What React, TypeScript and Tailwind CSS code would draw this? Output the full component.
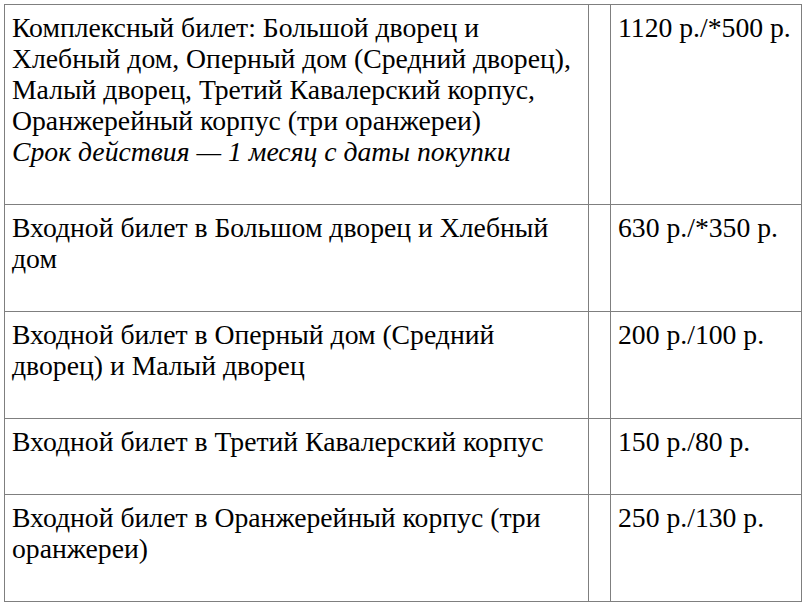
import React from "react";

const rows: { text: React.ReactNode; price: string; h: string }[] = [
  {
    text: (
      <>
        Комплексный билет: Большой дворец и Хлебный дом, Оперный дом (Средний дворец), Малый дворец, Третий Кавалерский корпус, Оранжерейный корпус (три оранжереи)
        <br />
        <i>Срок действия — 1 месяц с даты покупки</i>
      </>
    ),
    price: "1120 р./*500 р.",
    h: "h-[200px]",
  },
  { text: "Входной билет в Большом дворец и Хлебный дом", price: "630 р./*350 р.", h: "h-[107px]" },
  { text: "Входной билет в Оперный дом (Средний дворец) и Малый дворец", price: "200 р./100 р.", h: "h-[107px]" },
  { text: "Входной билет в Третий Кавалерский корпус", price: "150 р./80 р.", h: "h-[76px]" },
  { text: "Входной билет в Оранжерейный корпус (три оранжереи)", price: "250 р./130 р.", h: "h-[107px]" },
];

const cell = "border border-[#7f7f7f] align-top font-['Liberation_Serif','Times_New_Roman',serif] text-[27.7px] leading-[31px] text-black";

export default function App() {
  return (
    <div className="w-[806px] h-[607px] bg-white pl-1 pt-1 font-['Liberation_Serif','Times_New_Roman',serif]">
      <table className="table-fixed border-collapse w-[797px] font-['Liberation_Serif','Times_New_Roman',serif] text-[27.7px] leading-[31px] text-black">
        <colgroup>
          <col className="w-[584px]" />
          <col className="w-[22px]" />
          <col className="w-[191px]" />
        </colgroup>
        <tbody>
          {rows.map((r, i) => (
            <tr key={i} className={r.h}>
              <td className={`${cell} pl-[7px] pr-2 pt-[7px]`}>{r.text}</td>
              <td className={cell}></td>
              <td className={`${cell} pl-[7px] pt-[7px]`}>{r.price}</td>
            </tr>
          ))}
        </tbody>
      </table>
    </div>
  );
}
